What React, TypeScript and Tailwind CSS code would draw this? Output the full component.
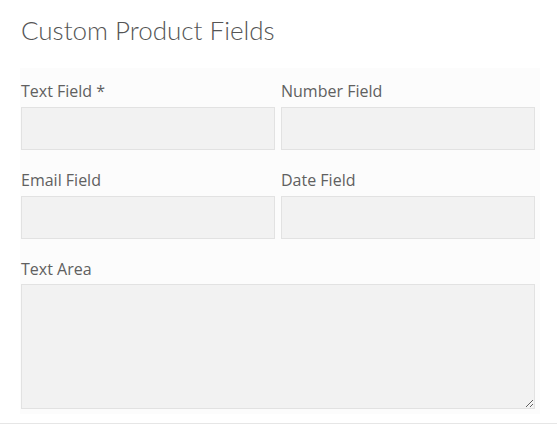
const fields = [
  { label: 'Text Field *' },
  { label: 'Number Field' },
  { label: 'Email Field' },
  { label: 'Date Field' },
];

const labelCls = 'h-[24px] text-[16px] leading-[24px] text-[#606060]';
const labelFont = { fontFamily: '"Open Sans", Lato, sans-serif' };

const Field = ({ label }: { label: string }) => (
  <div className="flex flex-col">
    <label className={labelCls} style={labelFont}>{label}</label>
    <input
      type="text"
      className="mt-[4px] h-[43px] w-full border border-[#e2e2e2] bg-[#f2f2f2] outline-none"
    />
  </div>
);

export default function App() {
  return (
    <div
      className="h-[425px] w-[557px] overflow-hidden bg-white"
      style={{ fontFamily: 'Lato, "Open Sans", sans-serif' }}
    >
      <div className="border-b border-[#e6e6e6] pb-[9px]">
        <h2 className="pl-[21px] pt-[12px] text-[26px] font-light leading-[36px] text-[#555555]">
          Custom Product Fields
        </h2>

        <div className="ml-[20px] mt-[20px] w-[520px] bg-[#fcfcfc] pb-[5px] pl-[1px] pr-[5px] pt-[11px]">
          <div className="grid grid-cols-2 gap-x-[6px] gap-y-[18px]">
            {fields.map((f) => (
              <Field key={f.label} label={f.label} />
            ))}
          </div>

          <div className="mt-[18px] flex flex-col">
            <label className={labelCls} style={labelFont}>Text Area</label>
            <textarea className="mt-[3px] h-[125px] w-full border border-[#e2e2e2] bg-[#f2f2f2] outline-none" />
          </div>
        </div>
      </div>
    </div>
  );
}
